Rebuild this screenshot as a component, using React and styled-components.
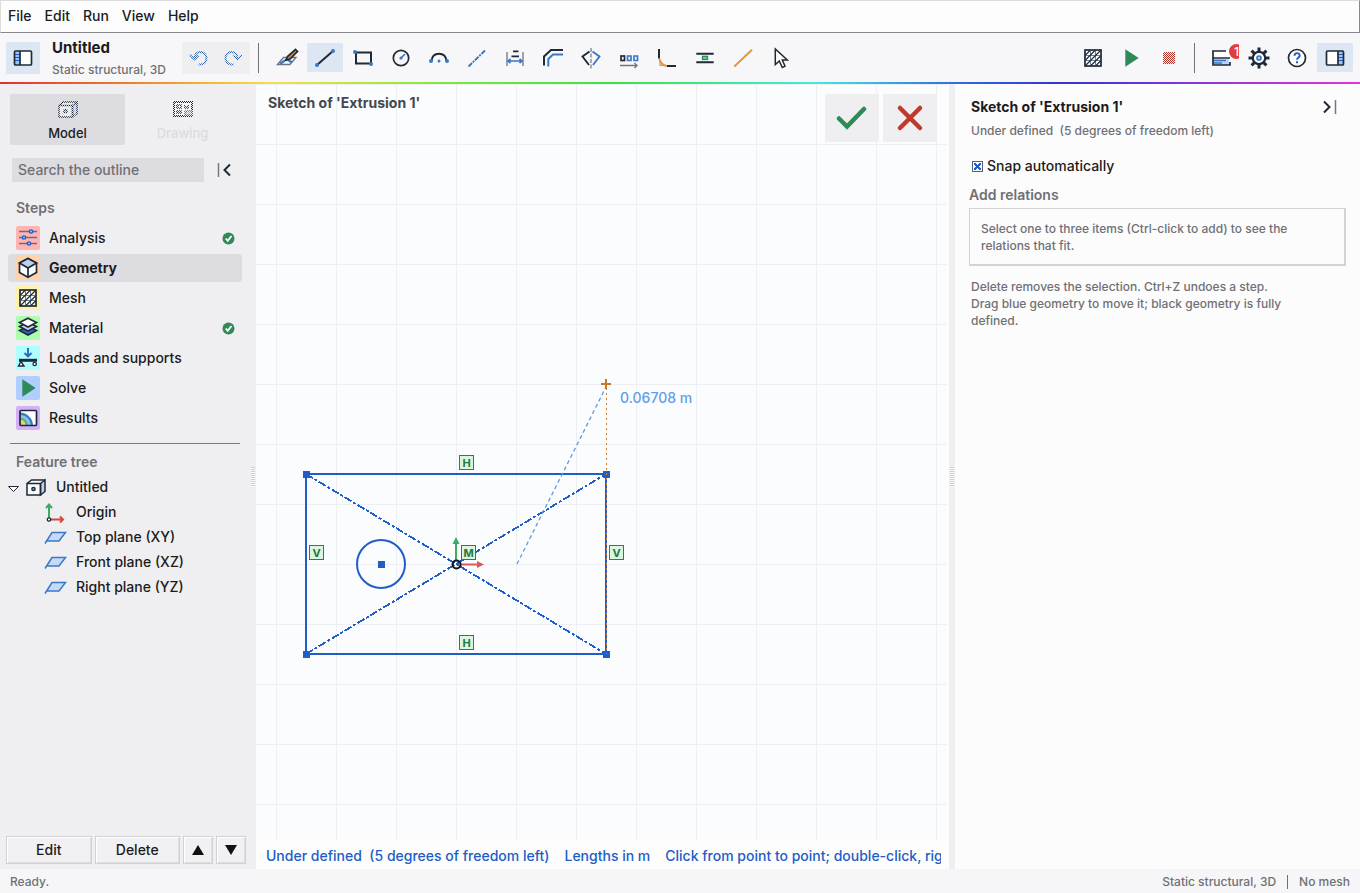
import React from "react";
import styled, { createGlobalStyle, css } from "styled-components";

const INK = "#1f2a36";
const BLUE = "#3a78c8";
const SKETCH = "#215dc6";

const GlobalStyle = createGlobalStyle`
    * {
        box-sizing: border-box;
    }

    body {
        margin: 0;
        font-family: Inter, "Liberation Sans", sans-serif;
        font-size: 14px;
        font-weight: 500;
        line-height: 20px;
        color: #1c1c20;
        background: #fcfcfd;
    }

    button, input {
        font: inherit;
        color: inherit;
    }

    button {
        padding: 0;
        border: none;
        background: none;
    }
`

const Page = styled.div`
    display: flex;
    flex-direction: column;
    height: 100vh;
    overflow: hidden;
`

const MenuBar = styled.nav`
    display: flex;
    flex: none;
    align-items: center;
    gap: 13px;
    height: 33px;
    padding: 0 7px 2px;
    background: #fdfdfd;
    border: 1px solid #dcdcde;
    border-right-color: #88888c;
    border-bottom-color: #88888c;
`

const Toolbar = styled.header`
    display: flex;
    flex: none;
    align-items: center;
    height: 49px;
    padding: 0 7px 0 6px;
    background: #f7f7f9;
`

const Rainbow = styled.div`
    flex: none;
    height: 2px;
    background: linear-gradient(90deg, #e03131, #f08c2c 11%, #f5e050 20%, #7be83c 33%, #3ee23e 45%, #45e8e0 60%, #2f6fe0 70%, #3434cf 78%, #8a35dc 88%, #e235dc);
`

const ToolButton = styled.button`
    position: relative;
    display: flex;
    flex: none;
    align-items: center;
    justify-content: center;
    width: ${props => props.$width || 36}px;
    height: ${props => props.$height || 29}px;
    overflow: hidden;
    border-radius: 1px;
    background: ${props => props.$active ? "#dde6f3" : "transparent"};
`

const ToolGroup = styled.div`
    display: flex;
    align-items: center;
    gap: 2px;
`

const History = styled.div`
    display: flex;
    width: 68px;
    height: 32px;
    margin-left: auto;
    align-items: center;
    background: #efeff1;
`

const Heading = styled.div`
    display: flex;
    align-items: center;
    width: 244px;
`

const Titles = styled.div`
    margin-left: 12px;
`

const Title = styled.h1`
    margin: 0;
    font-size: 15px;
    line-height: 24px;
    font-weight: 700;
`

const Subtitle = styled.div`
    font-size: 12px;
    line-height: 20px;
    white-space: pre;
    color: #707074;
`

const Separator = styled.div`
    flex: none;
    width: 1px;
    height: 30px;
    margin: 0 ${props => props.$right || 8}px 0 ${props => props.$left || 7}px;
    background: #707276;
`

const Spacer = styled.div`
    flex: 1;
`

const Badge = styled.span`
    position: absolute;
    top: 1px;
    right: -5px;
    width: 15px;
    height: 15px;
    border-radius: 8px;
    background: #e03c3c;
    color: white;
    font-size: 12px;
    line-height: 15px;
    text-align: center;
`

const Body = styled.div`
    display: flex;
    flex: 1;
    min-height: 0;
`

const Sidebar = styled.aside`
    display: flex;
    flex-direction: column;
    flex: none;
    width: 250px;
    background: #efeff1;
`

const Sash = styled.div`
    display: flex;
    flex: none;
    align-items: center;
    justify-content: center;
    width: 6px;
    background: #efeff1;

    &::after {
        content: "";
        width: 4px;
        height: 20px;
        background: repeating-linear-gradient(#cfcfd2 0 1px, #fafafa 1px 2px);
    }
`

const ModeTabs = styled.div`
    display: flex;
    padding: 10px 10px 0;
`

const ModeTab = styled.button`
    display: flex;
    flex: 1;
    flex-direction: column;
    align-items: center;
    gap: 3px;
    height: 51px;
    padding-top: 3px;
    padding-bottom: 3px;
    border-radius: 2px;
    font-size: 13px;
    line-height: 18px;
    background: ${props => props.$active ? "#dcdce1" : "transparent"};

    &:disabled {
        color: #dcdce0;
    }
`

const SearchRow = styled.div`
    display: flex;
    align-items: center;
    gap: 12px;
    padding: 13px 12px 0;
`

const Search = styled.input`
    width: 192px;
    height: 24px;
    padding: 0 6px 2px;
    border: none;
    background: #dcdce1;

    &::placeholder {
        color: #707074;
        opacity: 1;
    }
`

const SectionTitle = styled.h2`
    margin: 0;
    padding: ${props => props.$pad || "0"};
    font-size: 14px;
    line-height: 20px;
    font-weight: 600;
    color: #707074;
`

const Steps = styled.div`
    display: flex;
    flex-direction: column;
    gap: 2px;
    padding: 6px 8px 0;
`

const Step = styled.button`
    display: flex;
    align-items: center;
    gap: 9px;
    height: 28px;
    padding: 0 7px 0 8px;
    border-radius: 3px;
    text-align: left;
    font-weight: ${props => props.$active ? 700 : 500};
    background: ${props => props.$active ? "#dcdce1" : "transparent"};

    & > span {
        flex: 1;
    }
`

const StepIcon = styled.i`
    width: 24px;
    height: 24px;
    border-radius: 2px;
    background: ${props => props.$color};
`

const Divider = styled.hr`
    width: 230px;
    height: 1px;
    margin: 11px 10px 8px;
    border: none;
    background: #7c7c80;
`

const TreeItem = styled.div`
    display: flex;
    align-items: center;
    gap: ${props => props.$child ? 8 : 4}px;
    height: 25px;
    padding-left: ${props => props.$child ? 44 : 6}px;

    & > span {
        margin-left: ${props => props.$child ? 0 : 4}px;
    }
`

const Actions = styled.div`
    display: flex;
    gap: 3px;
    margin-top: auto;
    padding: 0 4px 5px 6px;
`

const ActionButton = styled.button`
    display: flex;
    flex: ${props => props.$small ? "0 0 30px" : "1"};
    align-items: center;
    justify-content: center;
    height: 28px;
    border: 1px solid #d2d2d5;
    box-shadow: inset 1px 1px #ffffff, inset -1px -1px #dededf;
    background: #f1f1f3;
`

const Canvas = styled.main`
    position: relative;
    display: flex;
    flex-direction: column;
    flex: 1;
    min-width: 0;
    background: #fdfdfe;
`

const Drawing = styled.div`
    flex: 1;
    min-height: 0;
    margin-right: 2px;
    background: #fbfcfe;
`

const CanvasTitle = styled.div`
    position: absolute;
    top: 9px;
    left: 12px;
    font-weight: 700;
    color: #45484d;
`

const Confirm = styled.div`
    position: absolute;
    top: 10px;
    right: 12px;
    display: flex;
    gap: 4px;
`

const ConfirmButton = styled.button`
    display: flex;
    align-items: center;
    justify-content: center;
    width: 54px;
    height: 48px;
    background: #efeff1;
`

const Hints = styled.div`
    display: flex;
    flex: none;
    gap: 15px;
    height: 29px;
    margin: 0 8px 0 10px;
    padding-top: 6px;
    overflow: hidden;
    white-space: pre;
    color: #215dc6;
`

const Panel = styled.section`
    flex: none;
    width: 405px;
    padding: 13px 14px 0;
    background: #fcfcfd;
`

const PanelTop = styled.div`
    display: flex;
    align-items: center;
    justify-content: space-between;
    padding: 0 8px 4px 2px;
`

const PanelTitle = styled.h2`
    margin: 0;
    font-size: 14px;
    line-height: 20px;
    font-weight: 700;
`

const Note = styled.p`
    margin: 0;
    font-size: 12px;
    line-height: 17px;
    color: #707074;
    ${props => props.$hint && css`
        max-width: 322px;
        margin: 12px 2px 0;
    `}
`

const CheckRow = styled.label`
    display: flex;
    align-items: center;
    gap: 4px;
    padding: 11px 3px 9px;
`

const Checkbox = styled.input`
    appearance: none;
    width: 11px;
    height: 11px;
    margin: 0;
    border: 1px solid #50627a;
    background: white;

    &:checked {
        background:
            linear-gradient(45deg, transparent 41%, #215dc6 41% 59%, transparent 59%) center / 7px 7px no-repeat,
            linear-gradient(-45deg, transparent 41%, #215dc6 41% 59%, transparent 59%) center / 7px 7px no-repeat,
            white;
    }
`

const RelationBox = styled.div`
    margin-top: 3px;
    padding: 11px 11px 10px;
    border: 1px solid #d4d4d7;
    border-right-width: 2px;
    border-bottom-width: 2px;
`

const StatusBar = styled.footer`
    display: flex;
    flex: none;
    align-items: center;
    height: 24px;
    padding: 1px 10px 0;
    background: #f6f6f8;
    font-size: 12px;
    color: #707074;
`

const StatusLine = styled.div`
    width: 1px;
    height: 14px;
    margin: 0 11px;
    background: #707074;
`

// disabled icons are stippled: every other pixel is left out
const Svg = styled.svg`
    display: block;
    flex: none;
    ${props => props.$dither && css`
        mask: repeating-conic-gradient(#000 0 25%, transparent 0 50%) 0 0 / 2px 2px;
    `}
`

function Icon({ children, width = 24, height = 24, dither }) {
    return (
        <Svg $dither={dither} width={width} height={height} viewBox={`0 0 ${width} ${height}`} fill="none" stroke={INK} strokeWidth="1.7" aria-hidden="true">
            {children}
        </Svg>
    )
}

const Dot = ({ x, y, r = 2 }) => <circle cx={x} cy={y} r={r} fill={BLUE} stroke="none" />

const PanelIcon = ({ right }) => (
    <Icon>
        <rect x="3.500" y="5" width="17" height="14" fill="white" stroke="none" />
        <path d={right ? "M15 5h5.500v14H15z" : "M3.500 5H9v14H3.500z"} fill="#9cc4f8" stroke="none" />
        <path d={right ? "M15 8.500h5M15 11.500h5M15 14.500h5" : "M4 8.500h5M4 11.500h5M4 14.500h5"} stroke={SKETCH} strokeWidth="1" />
        <rect x="3.500" y="5" width="17" height="14" rx="1" />
        <path d={right ? "M15 5v14" : "M9 5v14"} />
    </Icon>
)

const MeshIcon = () => (
    <Icon>
        <rect x="4" y="4" width="16" height="16" fill="white" fillOpacity=".7" />
        <path d="M9.500 4v16M14.500 4v16M4 9.500h16M4 14.500h16" strokeWidth="1" stroke="#6b7f96" />
        <path d="M4 9.500L9.500 4M4 14.500L14.500 4M4 20L20 4M9.500 20L20 9.500M14.500 20l5.500-5.500" strokeWidth="1.100" />
    </Icon>
)

const PlayIcon = () => (
    <Icon><path d="M6.300 3.300v17.400L19.700 12z" fill="#2e8b57" stroke="none" /></Icon>
)

const UndoIcon = ({ flip }) => (
    <Icon dither>
        <g transform={flip ? "matrix(-1 0 0 1 24 0)" : undefined} stroke="#2a64ae" strokeWidth="1.900">
            <path d="M3 9l4.500 4.500L11.500 9.500" />
            <path d="M7.500 12.500C7.500 8.500 10 6 13.500 6c3.500 0 6 2.800 6 6.300s-2.700 6.200-6.500 6.200h-1.500" />
        </g>
    </Icon>
)

const TOOLS = [
    ["Edit sketch", <Icon>
        <path d="M2.500 18.500L8.500 11.500H21l-6 7z" fill="#f4f8fd" stroke="#6c7680" strokeWidth="1.300" />
        <path d="M5 17.500c4-1 5-5 8-3.500s2 3 4 1" stroke={BLUE} strokeWidth="2.200" />
        <path d="M11 14l1.500-3.500 8-7 2 2-7.500 7.500z" fill="#c98d35" strokeWidth="1.700" />
    </Icon>],
    ["Line", <Icon><path d="M4 19L20 5" strokeWidth="2" /><Dot x={4} y={19} /><Dot x={20} y={5} /></Icon>],
    ["Rectangle", <Icon><rect x="5" y="6.500" width="15" height="11" strokeWidth="2" /><Dot x={4} y={6} /><Dot x={20} y={18} /></Icon>],
    ["Circle", <Icon><circle cx="12" cy="12" r="7.700" /><path d="M12 12l4-4" stroke={BLUE} /><Dot x={12} y={12} r={1.600} /></Icon>],
    ["Arc", <Icon><path d="M4.500 15C5 10 8 7.800 12 7.800S19 10 19.500 15" strokeWidth="2" /><Dot x={4} y={15} /><Dot x={20} y={15} /><Dot x={12} y={15} r={1.500} /></Icon>],
    ["Construction line", <Icon><path d="M3.500 20.500l17-16.500" stroke={BLUE} strokeWidth="1.900" strokeDasharray="5 1 2 1" /></Icon>],
    ["Dimension", <Icon>
        <path d="M4 6v14M20 6v14" stroke="#7d868f" strokeWidth="1.500" />
        <path d="M5 15h14M7.500 13L5 15l2.500 2M16.500 13l2.500 2-2.500 2" stroke={BLUE} strokeWidth="1.700" />
        <path d="M10 5.300h5.500M8.500 10.300h7.500" />
    </Icon>],
    ["Offset", <Icon><path d="M3 19.500v-9L10 4h12" strokeWidth="2" /><path d="M7.300 20.500V13L12 8.500h10" stroke={BLUE} strokeWidth="2" /></Icon>],
    ["Mirror", <Icon>
        <path d="M10.500 5.500l-7 5 6.500 8.500" strokeWidth="1.900" />
        <path d="M13.500 5.500l7 5L14 19" stroke={BLUE} strokeWidth="1.900" />
        <path d="M12 2v21" stroke="#89929a" strokeWidth="1.500" strokeDasharray="4 1.500" />
    </Icon>],
    ["Pattern", <Icon>
        <rect x="4" y="10" width="3.500" height="4.500" />
        <path d="M10.500 10H14v4.500h-3.500zM17 10h3.500v4.500H17z" stroke={BLUE} />
        <path d="M3 19.500h17M17.500 17l2.500 2.500-2.500 2.500" stroke="#6c7680" strokeWidth="1.400" />
    </Icon>],
    ["Fillet", <Icon>
        <path d="M5 13v6.500h7" stroke="#9aa2aa" strokeWidth="1.200" />
        <path d="M4 3v9.500M12 20h9" strokeWidth="2" />
        <path d="M4.500 13c1 4 3.500 6.500 7.500 7" stroke="#e39a3c" strokeWidth="2" />
    </Icon>],
    ["Relations", <Icon>
        <path d="M3.300 7.700h17.400M3.300 16.200h17.400" strokeWidth="2" />
        <rect x="9.500" y="10.300" width="5" height="3.200" fill="#6dcf8b" stroke="#2e8b57" strokeWidth="1.300" />
    </Icon>],
    ["Centre line", <Icon><path d="M3.300 20.500L21 3.700" stroke="#e09a3e" strokeWidth="2" /></Icon>],
    ["Select", <Icon><path d="M6.300 3v15.500l4-3.500 3 6.500 2.700-1.300-2.700-6.200h5z" fill="white" strokeWidth="1.500" /></Icon>],
]

const CubeIcon = () => (
    <Icon>
        <path d="M12 2.500L20.500 7v9.500L12 21.300l-8.500-4.800V7z" fill="#fbfcff" />
        <path d="M12 2.500L20.500 7 12 12 3.500 7z" fill="#bcd0f2" />
        <path d="M12 12v9.300" />
    </Icon>
)

const KNOBS = [[5.5, 15], [11.5, 8], [17.5, 13]]

const STEPS = [
    { name: "Analysis", color: "#ffb3b3", done: true, icon: <Icon>
        {KNOBS.map(([y, x]) => (
            <g key={y}>
                <path d={`M3 ${y}h18`} stroke="#66707c" strokeWidth="1.500" />
                <circle cx={x} cy={y} r="1.700" fill="#8cc0ff" stroke={SKETCH} strokeWidth="1.300" />
            </g>
        ))}
    </Icon> },
    { name: "Geometry", color: "#ffd3ac", active: true, icon: <CubeIcon /> },
    { name: "Mesh", color: "#fff3ab", icon: <MeshIcon /> },
    { name: "Material", color: "#aefcae", done: true, icon: <Icon>
        <g strokeWidth="1.600">
            <path d="M12 10.200l8.500 4.300L12 19l-8.500-4.500z" fill="#2f66c4" />
            <path d="M12 6.200l8.500 4.300L12 15l-8.500-4.500z" fill="#c3d7f5" />
            <path d="M12 2.200l8.500 4.300L12 11 3.500 6.500z" fill="white" />
        </g>
    </Icon> },
    { name: "Loads and supports", color: "#b0ffff", icon: <Icon>
        <path d="M12 2v8M8.500 7l3.500 3.500L15.500 7" stroke="#2968c0" strokeWidth="1.900" />
        <path d="M3 14.300h18" strokeWidth="3" />
        <path d="M5 15.500L2.500 20h5.500z" fill="white" strokeWidth="1.400" />
        <circle cx="18.700" cy="18" r="1.700" fill="white" strokeWidth="1.300" />
    </Icon> },
    { name: "Solve", color: "#b0ceff", icon: <PlayIcon /> },
    { name: "Results", color: "#d5b0fa", icon: <Icon>
        <path d="M4 4.500h16.500v15H4z" fill="white" stroke="none" />
        <path d="M4 6.500c7 0 13 6 13 13H4z" fill="#3f7ac8" stroke="none" />
        <path d="M4 9c6 0 10.500 4.500 10.500 10.500H4z" fill="#8cc8e8" stroke="none" />
        <path d="M4 11.500c4.500 0 8 3.500 8 8H4z" fill="#5fb08c" stroke="none" />
        <path d="M4 14c3.500 0 5.500 2 5.500 5.500H4z" fill="#f0d070" stroke="none" />
        <rect x="4" y="4.500" width="16.500" height="15" rx="1" />
    </Icon> },
]

const DoneIcon = () => (
    <Icon width={13} height={13}>
        <circle cx="6.500" cy="6.500" r="6" fill="#2e8b57" stroke="none" />
        <path d="M3.700 6.500l2 2.300L9.500 4" stroke="white" strokeWidth="1.800" />
    </Icon>
)

const PartShape = () => (
    <g strokeWidth="1.500">
        <path d="M3 8.500L7.500 5H21v11.500L17 20H3z" fill="#fafbfd" stroke="none" />
        <path d="M16.500 8.500L21 5v11.500L16.500 20z" fill="#bcd0f2" />
        <path d="M3 8.500h13.500V20H3zM3 8.500L7.500 5H21" />
        <circle cx="9.500" cy="14" r="1.600" fill="#8cc0ff" />
    </g>
)

const PlaneIcon = () => (
    <Icon>
        <path d="M7 7.500h14L15.500 16H3.500z" fill="#c6d9f5" stroke="none" />
        <path d="M1 18.500L8 7.500h13.500L15 16H3" stroke={BLUE} strokeWidth="1.500" />
    </Icon>
)

const OriginIcon = () => (
    <Icon>
        <path d="M5 18V5M2 8l3-3.500 3 3.500" stroke="#3cab64" strokeWidth="2" />
        <path d="M6.500 19.500h12M16 16.500l3 3-3 3" stroke="#d24a40" strokeWidth="2" />
        <circle cx="5" cy="19.500" r="1.700" fill="white" strokeWidth="1.300" />
    </Icon>
)

const GearIcon = () => (
    <Icon>
        <g strokeWidth="3">
            {[0, 45, 90, 135, 180, 225, 270, 315].map(a => (
                <path key={a} d="M12 1.500v4" transform={`rotate(${a} 12 12)`} />
            ))}
        </g>
        <circle cx="12" cy="12" r="6.200" fill="white" strokeWidth="2.200" />
        <circle cx="12" cy="12" r="2" fill="#b8d4fa" stroke={BLUE} />
    </Icon>
)

const EndArrow = ({ flip }) => (
    <Icon width={16} height={16}>
        <g transform={flip ? "matrix(-1 0 0 1 16 0)" : undefined}>
            <path d="M2.500 1v14" stroke="#707880" strokeWidth="1.500" />
            <path d="M14 2.500L8.500 8l5.500 5.500" strokeWidth="2" />
        </g>
    </Icon>
)

function Tag({ x, y, children }) {
    return (
        <g>
            <rect x={x - 7} y={y - 7} width="14" height="14" fill="#dcf5e0" stroke="#2f7d4d" />
            <text x={x} y={y + 4} textAnchor="middle" fontSize="11" fontWeight="700" fill="#1f7a3f">{children}</text>
        </g>
    )
}

function Sketch() {
    const corners = [[50, 390], [350, 390], [50, 570], [350, 570]];

    return (
        <Svg width="100%" height="100%" fill="none" role="img" aria-label="Sketch">
            <defs>
                <pattern id="grid" width="60" height="60" x="20" y="0" patternUnits="userSpaceOnUse">
                    <path d="M.5 0v60M0 .5h60" stroke="#edeff2" />
                </pattern>
            </defs>
            <rect width="100%" height="100%" fill="url(#grid)" />
            <path d="M50 390L350 570M50 570L350 390" stroke={SKETCH} strokeWidth="2" strokeDasharray="8 2 3 2" shapeRendering="crispEdges" />
            <rect x="50" y="390" width="300" height="180" stroke={SKETCH} strokeWidth="2" />
            <circle cx="125" cy="480" r="24" stroke={SKETCH} strokeWidth="2" />
            {[...corners, [125, 480]].map(([x, y]) => (
                <rect key={x + "-" + y} x={x - 3} y={y - 3} width="7" height="7" fill={SKETCH} />
            ))}
            <path d="M350.500 304v266" stroke="#d07a30" strokeDasharray="2 3" />
            <path d="M261 480l89-177" stroke="#629ddd" strokeWidth="1.300" strokeDasharray="4 3" />
            <path d="M345 300h10M350 295v10" stroke="#c87828" strokeWidth="2" />
            <text x="364" y="319" fontSize="14" fill="#629de8">0.06708 m</text>
            <path d="M200 476v-16" stroke="#3cab64" strokeWidth="2" />
            <path d="M196.500 460h7l-3.500-7z" fill="#3cab64" />
            <path d="M205 480.500h16" stroke="#d95c58" strokeWidth="2" />
            <path d="M221 477v7l7-3.500z" fill="#d95c58" />
            <circle cx="200.500" cy="480.500" r="4" stroke="#101418" strokeWidth="2" />
            <Tag x={210.5} y={378.5}>H</Tag>
            <Tag x={210.5} y={558.5}>H</Tag>
            <Tag x={60.5} y={468.5}>V</Tag>
            <Tag x={360.5} y={468.5}>V</Tag>
            <Tag x={212.5} y={468.5}>M</Tag>
        </Svg>
    )
}

function App() {
    return (
        <Page>
            <GlobalStyle />
            <MenuBar>
                {["File", "Edit", "Run", "View", "Help"].map(name => <button key={name}>{name}</button>)}
            </MenuBar>
            <Toolbar>
                <Heading>
                    <ToolButton $active $width={34} $height={32} aria-label="Toggle outline"><PanelIcon /></ToolButton>
                    <Titles>
                        <Title>Untitled</Title>
                        <Subtitle>Static structural, 3D</Subtitle>
                    </Titles>
                    <History>
                        <ToolButton $width={34} disabled aria-label="Undo"><UndoIcon /></ToolButton>
                        <ToolButton $width={34} disabled aria-label="Redo"><UndoIcon flip /></ToolButton>
                    </History>
                </Heading>
                <Separator $left={8} $right={10} />
                <ToolGroup>
                    {TOOLS.map(([name, icon]) => (
                        <ToolButton key={name} $active={name === "Line"} aria-label={name}>{icon}</ToolButton>
                    ))}
                </ToolGroup>
                <Spacer />
                <ToolGroup>
                    <ToolButton aria-label="Mesh"><MeshIcon /></ToolButton>
                    <ToolButton aria-label="Solve"><PlayIcon /></ToolButton>
                    <ToolButton aria-label="Stop" disabled>
                        <Icon dither><rect x="6" y="6" width="12" height="12" fill="#b8322c" stroke="none" /></Icon>
                    </ToolButton>
                </ToolGroup>
                <Separator />
                <ToolGroup>
                    <ToolButton aria-label="Messages">
                        <Icon>
                            <path d="M4 5h17v14H4z" fill="white" stroke="none" />
                            <path d="M4 13h16v6H4z" fill="#b8d4fa" stroke="none" />
                            <path d="M5 14.500h12M5 17h8" stroke={BLUE} strokeWidth="1.300" />
                            <path d="M17 5H4v14h17v-3M4 12h17" />
                        </Icon>
                        <Badge>1</Badge>
                    </ToolButton>
                    <ToolButton aria-label="Settings"><GearIcon /></ToolButton>
                    <ToolButton aria-label="Help">
                        <Icon>
                            <circle cx="12" cy="12" r="8.500" fill="white" />
                            <path d="M9.500 9.800c0-3.600 5.200-3.400 5.200-.3 0 2-2.700 2-2.700 4.300" stroke={SKETCH} strokeWidth="1.900" />
                            <path d="M12 15.300v2" stroke={SKETCH} strokeWidth="2" />
                        </Icon>
                    </ToolButton>
                    <ToolButton $active aria-label="Toggle properties"><PanelIcon right /></ToolButton>
                </ToolGroup>
            </Toolbar>
            <Rainbow />
            <Body>
                <Sidebar>
                    <ModeTabs>
                        <ModeTab $active><Icon dither><PartShape /></Icon>Model</ModeTab>
                        <ModeTab disabled>
                            <Icon dither>
                                <path d="M3 5h18v14H3z" fill="white" strokeWidth="2" />
                                <path d="M6 8h4v3H6zM6 14h4v2H6zM14 8v3h3V8" />
                                <path d="M14 14h7v4h-7z" fill="#8cb8f0" stroke={BLUE} />
                            </Icon>
                            Drawing
                        </ModeTab>
                    </ModeTabs>
                    <SearchRow>
                        <Search placeholder="Search the outline" aria-label="Search the outline" />
                        <button aria-label="Collapse outline"><EndArrow /></button>
                    </SearchRow>
                    <SectionTitle $pad="16px 16px 0">Steps</SectionTitle>
                    <Steps>
                        {STEPS.map(step => (
                            <Step key={step.name} $active={step.active}>
                                <StepIcon $color={step.color}>{step.icon}</StepIcon>
                                <span>{step.name}</span>
                                {step.done && <DoneIcon />}
                            </Step>
                        ))}
                    </Steps>
                    <Divider />
                    <SectionTitle $pad="0 16px 2px">Feature tree</SectionTitle>
                    <TreeItem>
                        <Icon width={14} height={14}><path d="M2.500 6.500h10l-5 5z" fill="white" strokeWidth="1" /></Icon>
                        <Icon><PartShape /></Icon>
                        <span>Untitled</span>
                    </TreeItem>
                    <TreeItem $child><OriginIcon /><span>Origin</span></TreeItem>
                    {["Top plane (XY)", "Front plane (XZ)", "Right plane (YZ)"].map(name => (
                        <TreeItem $child key={name}><PlaneIcon /><span>{name}</span></TreeItem>
                    ))}
                    <Actions>
                        <ActionButton>Edit</ActionButton>
                        <ActionButton>Delete</ActionButton>
                        <ActionButton $small aria-label="Move up">
                            <Icon width={12} height={12}><path d="M6 1l6 10H0z" fill="#111111" stroke="none" /></Icon>
                        </ActionButton>
                        <ActionButton $small aria-label="Move down">
                            <Icon width={12} height={12}><path d="M6 11L0 1h12z" fill="#111111" stroke="none" /></Icon>
                        </ActionButton>
                    </Actions>
                </Sidebar>
                <Sash />
                <Canvas>
                    <Drawing><Sketch /></Drawing>
                    <Hints>
                        <span>Under defined  (5 degrees of freedom left)</span>
                        <span>Lengths in m</span>
                        <span>Click from point to point; double-click, right-click or Esc ends</span>
                    </Hints>
                    <CanvasTitle>Sketch of 'Extrusion 1'</CanvasTitle>
                    <Confirm>
                        <ConfirmButton aria-label="Accept sketch">
                            <Icon width={32} height={32}><path d="M3 16.500l8 8L28 7" stroke="#2e8b57" strokeWidth="4.500" strokeLinecap="round" /></Icon>
                        </ConfirmButton>
                        <ConfirmButton aria-label="Cancel sketch">
                            <Icon width={32} height={32}><path d="M6 6l20 20M26 6L6 26" stroke="#c0392b" strokeWidth="4.500" strokeLinecap="round" /></Icon>
                        </ConfirmButton>
                    </Confirm>
                </Canvas>
                <Sash />
                <Panel>
                    <PanelTop>
                        <PanelTitle>Sketch of 'Extrusion 1'</PanelTitle>
                        <button aria-label="Collapse panel"><EndArrow flip /></button>
                    </PanelTop>
                    <PanelTop>
                        <Subtitle>Under defined  (5 degrees of freedom left)</Subtitle>
                    </PanelTop>
                    <CheckRow>
                        <Checkbox type="checkbox" defaultChecked />
                        Snap automatically
                    </CheckRow>
                    <SectionTitle>Add relations</SectionTitle>
                    <RelationBox>
                        <Note>Select one to three items (Ctrl-click to add) to see the relations that fit.</Note>
                    </RelationBox>
                    <Note $hint>Delete removes the selection. Ctrl+Z undoes a step. Drag blue geometry to move it; black geometry is fully defined.</Note>
                </Panel>
            </Body>
            <StatusBar>
                <span>Ready.</span>
                <Spacer />
                <span>Static structural, 3D</span>
                <StatusLine />
                <span>No mesh</span>
            </StatusBar>
        </Page>
    )
}

export default App;
